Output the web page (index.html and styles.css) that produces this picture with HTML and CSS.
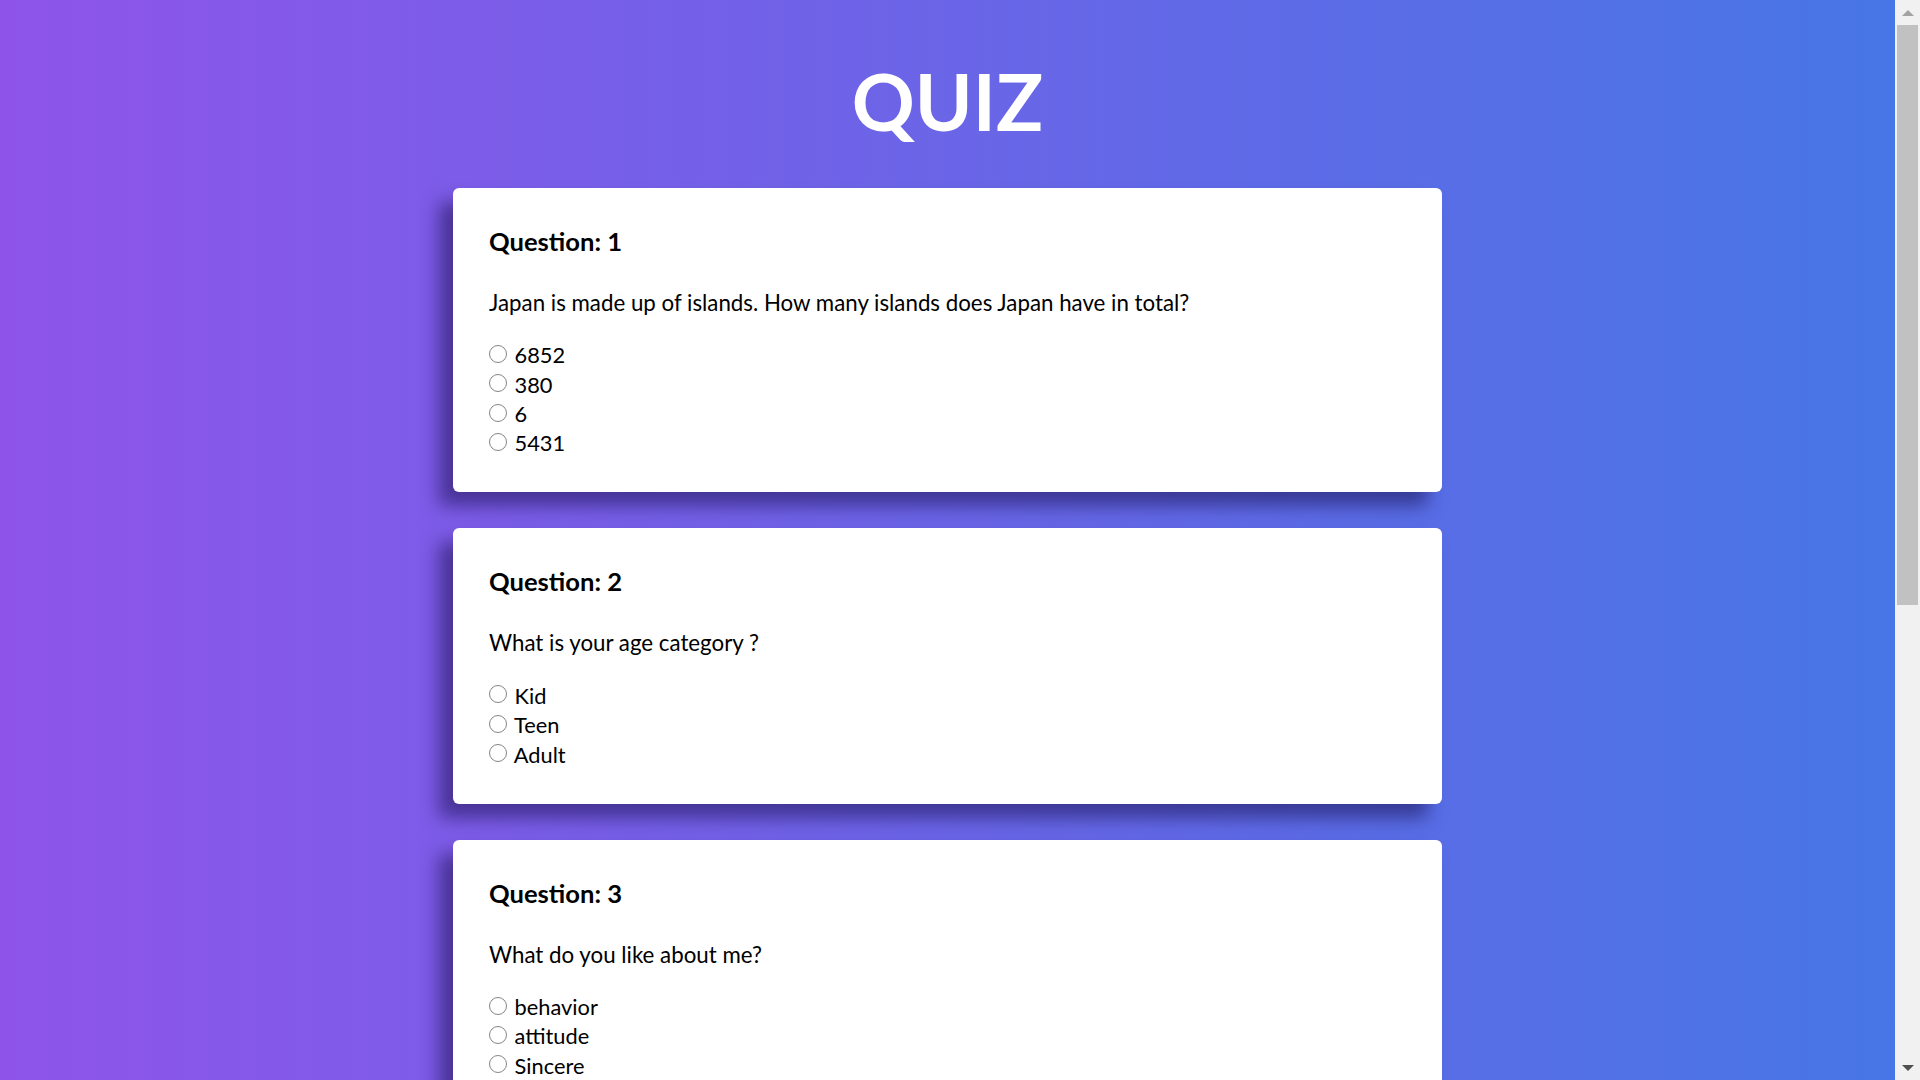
FILE: index.html
```html
<!DOCTYPE html>
<html lang="en">
<head>
<meta charset="utf-8">
<title>Quiz</title>
<link rel="stylesheet" href="styles.css">
</head>
<body>
<div class="page">
  <main class="main">
    <h1 class="title">QUIZ</h1>

    <section class="card">
      <h3 class="q-num">Question: 1</h3>
      <p class="q-text">Japan is made up of islands. How many islands does Japan have in total?</p>
      <div class="options">
        <label class="option"><input type="radio" name="q1"> 6852</label>
        <label class="option"><input type="radio" name="q1"> 380</label>
        <label class="option"><input type="radio" name="q1"> 6</label>
        <label class="option"><input type="radio" name="q1"> 5431</label>
      </div>
    </section>

    <section class="card">
      <h3 class="q-num">Question: 2</h3>
      <p class="q-text">What is your age category ?</p>
      <div class="options">
        <label class="option"><input type="radio" name="q2"> Kid</label>
        <label class="option"><input type="radio" name="q2"> Teen</label>
        <label class="option"><input type="radio" name="q2"> Adult</label>
      </div>
    </section>

    <section class="card">
      <h3 class="q-num">Question: 3</h3>
      <p class="q-text">What do you like about me?</p>
      <div class="options">
        <label class="option"><input type="radio" name="q3"> behavior</label>
        <label class="option"><input type="radio" name="q3"> attitude</label>
        <label class="option"><input type="radio" name="q3"> Sincere</label>
      </div>
    </section>
  </main>
  <div class="scrollbar">
    <div class="sb-btn sb-up"></div>
    <div class="sb-track"><div class="sb-thumb"></div></div>
    <div class="sb-btn sb-down"></div>
  </div>
</div>
</body>
</html>
```
FILE: styles.css
```css
html, body {
  margin: 0;
  padding: 0;
  height: 100%;
  overflow: hidden;
}
body {
  font-family: Lato, "Open Sans", sans-serif;
  color: #000;
}
.page {
  display: grid;
  grid-template-columns: 1fr 25px;
  height: 100vh;
}
.main {
  background: linear-gradient(to right, #8e54e9, #4776e6);
  overflow: hidden;
  padding-top: 53px;
}
.title {
  margin: 0 0 39px;
  text-align: center;
  color: #fff;
  font-size: 78px;
  line-height: 96px;
  font-weight: 700;
}
.card {
  width: 989px;
  box-sizing: border-box;
  margin: 0 auto 36px;
  background: #fff;
  border-radius: 6px;
  padding: 38px 29px 35px;
  box-shadow: -14px 14px 18px rgba(20, 10, 70, 0.5);
}
.q-num {
  margin: 0;
  padding-left: 7px;
  font-size: 25.6px;
  line-height: 30px;
  font-weight: 700;
}
.q-text {
  margin: 32px 0 23px;
  padding-left: 7px;
  font-size: 22.3px;
  line-height: 29.3px;
}
.option {
  display: flex;
  align-items: center;
  height: 29.3px;
  font-size: 21.8px;
  white-space: pre;
}
.option input {
  appearance: none;
  -webkit-appearance: none;
  width: 18px;
  height: 18px;
  margin: 0 2px 2px 7px;
  border: 1px solid #858585;
  border-radius: 50%;
  background: #fff;
  box-sizing: border-box;
  flex: none;
}
.scrollbar {
  background: #f1f1f1;
  display: flex;
  flex-direction: column;
}
.sb-btn {
  height: 25px;
  flex: none;
  display: flex;
  align-items: center;
  justify-content: center;
}
.sb-up::before {
  content: "";
  border-left: 6px solid transparent;
  border-right: 6px solid transparent;
  border-bottom: 6px solid #a3a3a3;
}
.sb-down::before {
  content: "";
  border-left: 6px solid transparent;
  border-right: 6px solid transparent;
  border-top: 6px solid #505050;
}
.sb-track {
  flex: 1;
  padding: 0 2px;
}
.sb-thumb {
  height: 580px;
  background: #c1c1c1;
}
```
